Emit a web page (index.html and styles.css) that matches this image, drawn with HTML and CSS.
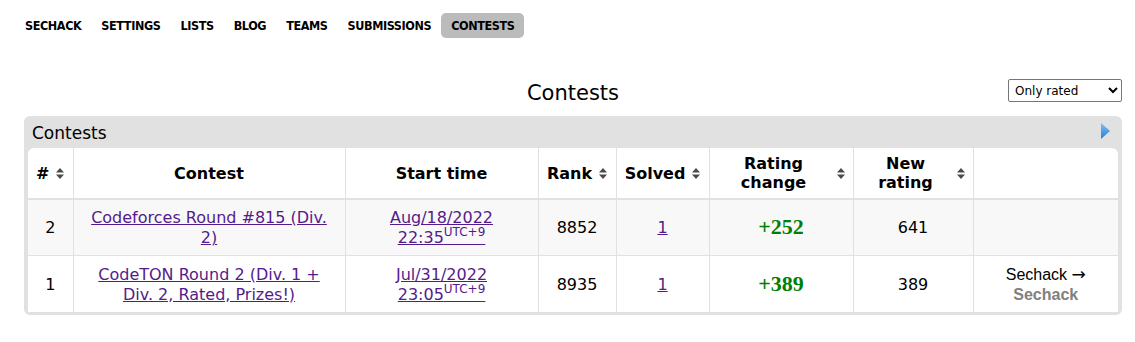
FILE: index.html
```html
<!DOCTYPE html>
<html>
<head>
<meta charset="utf-8">
<link rel="stylesheet" href="styles.css">
</head>
<body>
<nav class="nav">
  <a class="nav-item" href="#">SECHACK</a>
  <a class="nav-item" href="#">SETTINGS</a>
  <a class="nav-item" href="#">LISTS</a>
  <a class="nav-item" href="#">BLOG</a>
  <a class="nav-item" href="#">TEAMS</a>
  <a class="nav-item" href="#">SUBMISSIONS</a>
  <a class="nav-item active" href="#">CONTESTS</a>
</nav>

<div class="title-row">
  <div></div>
  <h1 class="title">Contests</h1>
  <select class="filter"><option>Only rated</option><option>All</option></select>
</div>

<section class="box">
  <div class="caption">
    <span>Contests</span>
    <svg class="toggle" width="9" height="16" viewBox="0 0 9 16">
      <defs><linearGradient id="bl" x1="0" y1="0" x2="0" y2="1"><stop offset="0" stop-color="#7cc0f2"/><stop offset="1" stop-color="#2a7fd4"/></linearGradient></defs>
      <polygon points="0,0 9,8 0,16" fill="url(#bl)"/>
    </svg>
  </div>
  <table class="grid">
    <colgroup>
      <col class="c-num"><col class="c-contest"><col class="c-time"><col class="c-rank"><col class="c-solved"><col class="c-change"><col class="c-new"><col class="c-last">
    </colgroup>
    <thead>
      <tr>
        <th><div class="th-in"><span>#</span><svg class="sort" width="8" height="11" viewBox="0 0 8 11"><polygon points="4,0 8,4.5 0,4.5" /><polygon points="0,6.5 8,6.5 4,11" /></svg></div></th>
        <th>Contest</th>
        <th>Start time</th>
        <th><div class="th-in"><span>Rank</span><svg class="sort" width="8" height="11" viewBox="0 0 8 11"><polygon points="4,0 8,4.5 0,4.5" /><polygon points="0,6.5 8,6.5 4,11" /></svg></div></th>
        <th><div class="th-in"><span>Solved</span><svg class="sort" width="8" height="11" viewBox="0 0 8 11"><polygon points="4,0 8,4.5 0,4.5" /><polygon points="0,6.5 8,6.5 4,11" /></svg></div></th>
        <th><div class="th-in"><span class="grow">Rating<br>change</span><svg class="sort" width="8" height="11" viewBox="0 0 8 11"><polygon points="4,0 8,4.5 0,4.5" /><polygon points="0,6.5 8,6.5 4,11" /></svg></div></th>
        <th><div class="th-in"><span class="grow">New<br>rating</span><svg class="sort" width="8" height="11" viewBox="0 0 8 11"><polygon points="4,0 8,4.5 0,4.5" /><polygon points="0,6.5 8,6.5 4,11" /></svg></div></th>
        <th></th>
      </tr>
    </thead>
    <tbody>
      <tr class="odd">
        <td>2</td>
        <td class="contest"><a href="#">Codeforces Round #815 (Div. 2)</a></td>
        <td><a href="#">Aug/18/2022<br>22:35<sup>UTC+9</sup></a></td>
        <td>8852</td>
        <td><a href="#">1</a></td>
        <td><span class="delta">+252</span></td>
        <td>641</td>
        <td></td>
      </tr>
      <tr>
        <td>1</td>
        <td class="contest"><a href="#">CodeTON Round 2 (Div. 1 + Div. 2, Rated, Prizes!)</a></td>
        <td><a href="#">Jul/31/2022<br>23:05<sup>UTC+9</sup></a></td>
        <td>8935</td>
        <td><a href="#">1</a></td>
        <td><span class="delta">+389</span></td>
        <td>389</td>
        <td class="handles">Sechack <span class="arrow">→</span><br><span class="gray">Sechack</span></td>
      </tr>
    </tbody>
  </table>
</section>
</body>
</html>
```

FILE: styles.css
```css
body {
  margin: 0;
  font-family: "DejaVu Sans", Verdana, sans-serif;
  color: #000;
  background: #fff;
}

.nav {
  display: flex;
  margin-top: 13px;
  padding-left: 15px;
  height: 25px;
}

.nav-item {
  font-family: "DejaVu Sans Condensed", "DejaVu Sans", sans-serif;
  font-stretch: condensed;
  font-weight: bold;
  font-size: 12.5px;
  letter-spacing: -0.4px;
  line-height: 25px;
  padding: 0 10px;
  color: #000;
  text-decoration: none;
  border-radius: 5px;
}

.nav-item.active {
  background: #bbbbbb;
}

.title-row {
  display: grid;
  grid-template-columns: 1fr auto 1fr;
  align-items: start;
  margin: 41px 13px 0 24px;
  height: 37px;
}

.title {
  margin: 0;
  font-size: 21px;
  font-weight: normal;
  line-height: 26px;
  padding-top: 1px;
}

.filter {
  justify-self: end;
  width: 114px;
  height: 23px;
  font-family: "DejaVu Sans", Verdana, sans-serif;
  font-size: 12px;
  border: 1px solid #767676;
  border-radius: 2px;
  background: #fff;
  color: #000;
  padding: 0 2px;
}

.box {
  margin: 0 13px 0 24px;
  background: #e1e1e1;
  border-radius: 6px;
  padding: 0 4px 3px 4px;
}

.caption {
  display: flex;
  align-items: center;
  justify-content: space-between;
  height: 32px;
  padding: 1px 8px 0 4px;
  box-sizing: border-box;
  font-size: 17px;
}

.toggle {
  display: block;
  margin-top: -3px;
}

.grid {
  width: 100%;
  border-collapse: collapse;
  table-layout: fixed;
  background: #fff;
  border-radius: 6px 6px 0 0;
  overflow: hidden;
}

.c-num { width: 45px; }
.c-contest { width: 272px; }
.c-time { width: 193px; }
.c-rank { width: 78px; }
.c-solved { width: 93px; }
.c-change { width: 144px; }
.c-new { width: 120px; }
.c-last { width: 145px; }

.grid th,
.grid td {
  border: 1px solid #e1e1e1;
  text-align: center;
  vertical-align: middle;
}

.grid tr:first-child th { border-top: none; }
.grid th:first-child, .grid td:first-child { border-left: none; }
.grid th:last-child, .grid td:last-child { border-right: none; }
.grid tbody tr:last-child td { border-bottom: none; }

.grid th {
  font-size: 16px;
  font-weight: bold;
  line-height: 19px;
  padding: 6px 8px;
  height: 38px;
}

.grid thead tr th { border-bottom: 2px solid #e1e1e1; }

.th-in {
  display: flex;
  align-items: center;
  justify-content: center;
  gap: 7px;
}

.th-in .grow {
  flex: 1;
  text-align: center;
}

.sort {
  display: block;
  flex: none;
  fill: #4a4a4a;
}

.grid td {
  font-size: 16px;
  line-height: 20px;
  padding: 8px 6px 7px;
  height: 40px;
}

.grid td.contest {
  padding-left: 12px;
  padding-right: 12px;
}

.grid tr.odd td {
  background: #f8f8f8;
}

.grid a {
  color: #551a8b;
}

.grid sup {
  font-size: 12px;
  line-height: 0;
  vertical-align: 7px;
}

.delta {
  font-family: "Liberation Serif", "Times New Roman", serif;
  font-weight: bold;
  font-size: 22px;
  color: #008000;
}

.handles {
  font-family: "Liberation Sans", Arial, sans-serif;
}

.arrow {
  font-family: "DejaVu Sans", sans-serif;
  font-size: 17px;
}

.gray {
  color: #808080;
  font-weight: bold;
}
```
